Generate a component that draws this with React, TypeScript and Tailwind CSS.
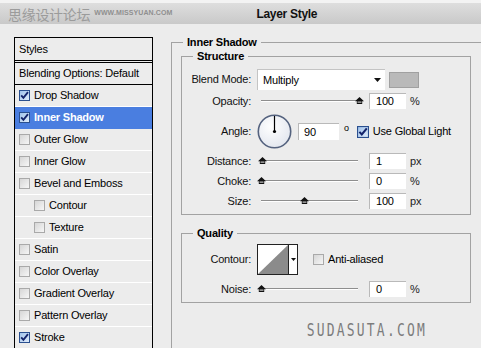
import * as React from "react";

const STYLE_ROWS: { label: string; checked?: boolean; selected?: boolean; indent?: boolean }[] = [
  { label: "Drop Shadow", checked: true },
  { label: "Inner Shadow", checked: true, selected: true },
  { label: "Outer Glow" },
  { label: "Inner Glow" },
  { label: "Bevel and Emboss" },
  { label: "Contour", indent: true },
  { label: "Texture", indent: true },
  { label: "Satin" },
  { label: "Color Overlay" },
  { label: "Gradient Overlay" },
  { label: "Pattern Overlay" },
  { label: "Stroke", checked: true },
];

function CheckBox({ checked = false, size = 11 }: { checked?: boolean; size?: number }) {
  return (
    <svg width={size} height={size} viewBox="0 0 11 11" className="shrink-0">
      <defs>
        <linearGradient id="cbOff" x1="0" y1="0" x2="1" y2="1">
          <stop offset="0" stopColor="#d4d4d4" />
          <stop offset="1" stopColor="#f8f8f8" />
        </linearGradient>
        <linearGradient id="cbOn" x1="0" y1="0" x2="1" y2="1">
          <stop offset="0" stopColor="#9cc0ea" />
          <stop offset="1" stopColor="#e3eefb" />
        </linearGradient>
      </defs>
      <rect
        x="0.5"
        y="0.5"
        width="10"
        height="10"
        fill={checked ? "url(#cbOn)" : "url(#cbOff)"}
        stroke={checked ? "#2a4f8f" : "#a9a9a9"}
      />
      {checked && (
        <path d="M2.2 5.4 L4.4 7.8 L9 2.2" fill="none" stroke="#14246b" strokeWidth="1.9" />
      )}
    </svg>
  );
}

function Thumb() {
  return (
    <svg width="9" height="8" viewBox="0 0 9 8">
      <path d="M4.5 0 L9 4.2 L7.2 4.2 L7.2 7 L1.8 7 L1.8 4.2 L0 4.2 Z" fill="#111" />
      <rect x="2.5" y="4.6" width="4" height="1" fill="#e8e8e8" />
    </svg>
  );
}

function Slider({ at }: { at: number }) {
  return (
    <div className="relative w-[104px] h-[14px]">
      <div className="absolute left-[4px] right-[3px] top-[6px] h-[2px] bg-[#8e8e8e] border-b border-white" />
      <div className="absolute top-[3px]" style={{ left: at - 4 }}>
        <Thumb />
      </div>
    </div>
  );
}

function NumBox({ value }: { value: string }) {
  return (
    <div className="ml-[8px] w-[37px] h-[16px] bg-white border-t border-l border-[#b9b9b9] pl-[6px] text-[11px] leading-[15px]">
      {value}
    </div>
  );
}

function Label({ children }: { children: React.ReactNode }) {
  return <div className="w-[70px] shrink-0 text-right pr-[1px] text-[11px] text-[#111]">{children}</div>;
}

function SliderRow({ label, at, value, unit, className }: { label: string; at: number; value: string; unit: string; className?: string }) {
  return (
    <div className={"flex items-center h-[18px] " + (className ?? "")}>
      <Label>{label}</Label>
      <div className="ml-[5px] flex items-center">
        <Slider at={at} />
        <NumBox value={value} />
        <span className="ml-[4px] text-[11px] text-[#222]">{unit}</span>
      </div>
    </div>
  );
}

function Dial() {
  return (
    <svg width="35" height="35" viewBox="0 0 35 35">
      <defs>
        <radialGradient id="dialFill" cx="0.4" cy="0.35" r="0.7">
          <stop offset="0" stopColor="#ffffff" />
          <stop offset="1" stopColor="#e2e6ee" />
        </radialGradient>
      </defs>
      <circle cx="17.5" cy="17.5" r="16.2" fill="url(#dialFill)" stroke="#54627e" strokeWidth="1.6" />
      <line x1="17.5" y1="17.5" x2="17.5" y2="2" stroke="#000" strokeWidth="1.2" />
      <circle cx="17.5" cy="17.5" r="1.6" fill="#000" />
    </svg>
  );
}

export default function App() {
  return (
    <div className="w-[481px] h-[348px] overflow-hidden bg-[#ececec] font-['Liberation_Sans',Arial,sans-serif] text-[11px] tracking-[-0.2px] text-black">
      {/* Title bar */}
      <div className="h-[24px] border-t-[3px] border-[#f3f3f3] bg-gradient-to-b from-[#dedede] to-[#c9c9c9] flex items-center">
        <span className="ml-[8px] text-[14px] leading-none text-[#9b9b9b] tracking-[-0.3px] font-['Noto_Sans_CJK_SC',sans-serif]">
          思缘设计论坛
        </span>
        <span className="ml-[4px] text-[7px] font-bold text-[#8f8f8f] tracking-[0.1px]">WWW.MISSYUAN.COM</span>
        <span className="ml-[84px] text-[12px] font-bold text-[#111] tracking-[-0.3px]">Layer Style</span>
      </div>

      <div className="flex pt-[13px]">
        {/* Styles list */}
        <div className="ml-[14px] w-[139px] shrink-0 border-l border-r border-t border-black">
          <div className="h-[25px] border-b-[3px] border-double border-black pl-[4px] flex items-center">Styles</div>
          <div className="h-[22px] border-b border-black pl-[4px] flex items-center">Blending Options: Default</div>
          {STYLE_ROWS.map((row) => (
            <div
              key={row.label}
              className={
                "h-[22px] border-b flex items-center gap-[4px] " +
                (row.indent ? "pl-[19px] " : "pl-[4px] ") +
                (row.selected ? "bg-[#4a7ee0] border-[#4a7ee0] text-white font-bold" : "border-white")
              }
            >
              <CheckBox checked={row.checked} />
              <span>{row.label}</span>
            </div>
          ))}
        </div>

        {/* Settings */}
        <fieldset className="ml-[18px] -mt-[1px] w-[330px] min-w-0 shrink-0 border border-[#a2a2a2] pl-[9px] pb-[40px]">
          <legend className="ml-[2px] px-[4px] font-bold text-[11px] leading-[13px]">Inner Shadow</legend>

          <fieldset className="mt-[1px] w-[290px] border border-[#a2a2a2] pt-[5px] pb-[4px]">
            <legend className="ml-[11px] px-[4px] font-bold text-[11px] leading-[13px]">Structure</legend>

            <div className="flex items-center h-[23px]">
              <Label>Blend Mode:</Label>
              <div className="ml-[5px] w-[128px] h-[21px] bg-white border-t border-l border-[#c4c4c4] flex items-center justify-between pl-[5px] pr-[4px]">
                <span>Multiply</span>
                <svg width="7" height="4" viewBox="0 0 7 4">
                  <path d="M0 0 H7 L3.5 4 Z" fill="#111" />
                </svg>
              </div>
              <div className="ml-[4px] w-[30px] h-[16px] bg-[#b9b9b9] border border-[#a0a0a0]" />
            </div>

            <SliderRow label="Opacity:" at={102} value="100" unit="%" className="mt-[1px]" />

            <div className="flex items-center h-[35px] mt-[4px]">
              <Label>Angle:</Label>
              <div className="ml-[5px] flex items-center">
                <Dial />
                <div className="ml-[6px] w-[41px] h-[17px] bg-white border-t border-l border-[#b9b9b9] pl-[5px] leading-[16px]">90</div>
                <span className="ml-[5px] -mt-[6px] text-[9px]">o</span>
                <div className="ml-[8px] flex items-center gap-[4px]">
                  <CheckBox checked size={12} />
                  <span>Use Global Light</span>
                </div>
              </div>
            </div>

            <SliderRow label="Distance:" at={5} value="1" unit="px" className="mt-[3px]" />
            <SliderRow label="Choke:" at={4} value="0" unit="%" className="mt-[2px]" />
            <SliderRow label="Size:" at={47} value="100" unit="px" className="mt-[2px]" />
          </fieldset>

          <fieldset className="mt-[12px] w-[290px] border border-[#a2a2a2] pt-[4px] pb-[4px]">
            <legend className="ml-[11px] px-[4px] font-bold text-[11px] leading-[13px]">Quality</legend>

            <div className="flex items-center h-[31px]">
              <Label>Contour:</Label>
              <div className="ml-[5px] w-[41px] h-[31px] bg-white border border-[#222] flex">
                <svg width="30" height="29" viewBox="0 0 30 29" className="shrink-0">
                  <path d="M0 29 L30 0 L30 29 Z" fill="#8b8b8b" />
                </svg>
                <div className="w-[9px] border-l border-[#222] flex items-center justify-center">
                  <svg width="5" height="3" viewBox="0 0 5 3">
                    <path d="M0 0 H5 L2.5 3 Z" fill="#111" />
                  </svg>
                </div>
              </div>
              <div className="ml-[15px] flex items-center gap-[4px]">
                <CheckBox />
                <span>Anti-aliased</span>
              </div>
            </div>

            <SliderRow label="Noise:" at={4} value="0" unit="%" className="mt-[5px]" />
          </fieldset>

          <div className="w-[290px] mt-[20px] flex justify-end pr-[44px]">
            <span className="inline-block scale-y-[1.35] text-[13px] leading-none tracking-[2.2px] text-[#7c7c7c] font-['DejaVu_Sans_Mono',monospace]">
              SUDASUTA.COM
            </span>
          </div>
        </fieldset>
      </div>
    </div>
  );
}
